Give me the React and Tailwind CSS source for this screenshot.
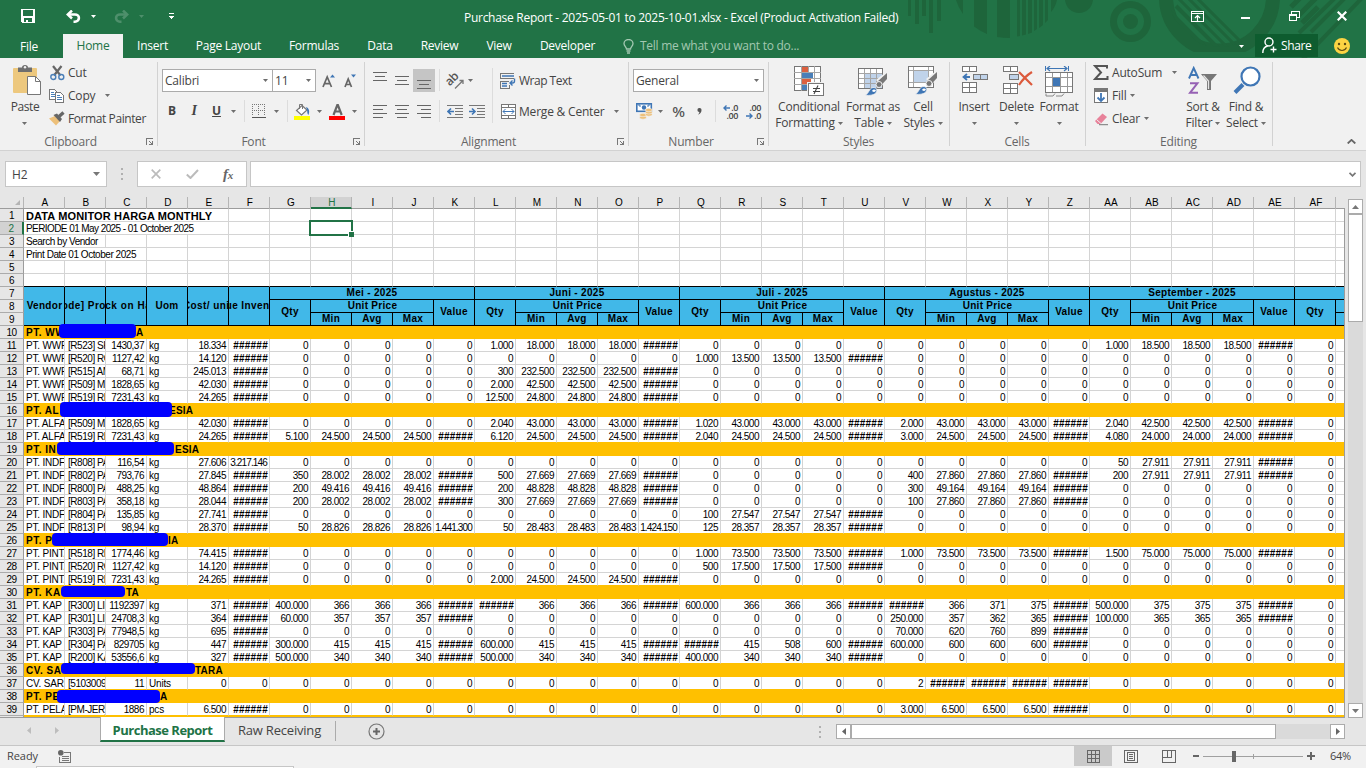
import React from "react";

/* ---------- small shared pieces ---------- */

const Caret = ({ className = "" }) => (
  <svg width="5" height="3" viewBox="0 0 5 3" className={`shrink-0 ${className || "text-[#6e6e6e]"}`}>
    <path d="M0 0h5L2.500 3z" fill="currentColor" />
  </svg>
);

const Svg = ({ w, h, children, className = "", crisp = false }) => (
  <svg
    width={w}
    height={h}
    viewBox={`0 0 ${w} ${h}`}
    fill="none"
    shapeRendering={crisp ? "crispEdges" : "auto"}
    className={`shrink-0 ${className}`}
  >
    {children}
  </svg>
);

const Slot = ({ className = "", children }) => (
  <div className={`flex h-full shrink-0 items-center justify-center ${className}`}>{children}</div>
);

const Sep = ({ className = "" }) => <div className={`w-px shrink-0 bg-[#dcdcdc] ${className}`} />;

const Launcher = () => (
  <Svg w={8} h={8} crisp className="absolute bottom-[4px] right-[4px]">
    <path d="M0 7V0h7v1H1v6z" fill="#777" />
    <path d="M3 3l3 3" stroke="#777" />
    <path d="M7 3v4H3v-1h3V3z" fill="#777" />
  </Svg>
);

const Group = ({ label, className, launcher, children }) => (
  <section className={`relative flex shrink-0 flex-col ${className}`}>
    <div className="flex h-[76px]">{children}</div>
    <div className="flex h-4 items-center justify-center text-[#666]">
      <span>{label}</span>
    </div>
    {launcher && <Launcher />}
    <div className="absolute bottom-1 right-0 top-1 w-px bg-[#d2d2d2]" />
  </section>
);

const BigButton = ({ icon, lines, className }) => (
  <div className={`flex shrink-0 flex-col items-center pt-2 ${className}`}>
    <div className="flex h-[33px] items-start">{icon}</div>
    <div className="h-4 whitespace-nowrap leading-4">{lines[0]}</div>
    <div className="flex h-4 items-center gap-[3px] whitespace-nowrap leading-4">
      {lines[1] && <span>{lines[1]}</span>}
      <Caret />
    </div>
  </div>
);

const SmallRow = ({ icon, text, caret, caretClass = "ml-1", textClass = "" }) => (
  <div className="flex h-[23px] items-center">
    <div className="mr-[3px] flex w-4 shrink-0 items-center justify-center">{icon}</div>
    <span className={`whitespace-nowrap ${textClass}`}>{text}</span>
    {caret && (
      <div className={caretClass}>
        <Caret />
      </div>
    )}
  </div>
);

/* ---------- icons ---------- */

const SaveIcon = () => (
  <Svg w={14} h={14} crisp>
    <path d="M0 0h14v14H1l-1-1zM2 1v6h10V1zM3 9v4h2v-2h2v2h4V9z" fill="#fff" fillRule="evenodd" />
  </Svg>
);

const UndoIcon = ({ className = "" }) => (
  <Svg w={15} h={13} className={className}>
    <path d="M2 4.500h7a3.800 3.500 0 0 1 0 7.200H7.500" stroke="#fff" strokeWidth="2.600" />
    <path d="M6 .5L1.800 4.500 6 8.500" stroke="#fff" strokeWidth="2.500" />
  </Svg>
);

const PasteIcon = () => (
  <Svg w={30} h={31}>
    <rect x="1" y="3" width="24" height="25" rx="1" fill="#edc87e" />
    <path d="M6 2.500h4a3 2.500 0 0 1 6 0h4V7H6z" fill="#6e6e6e" />
    <circle cx="13" cy="2.300" r="1.200" fill="#f1f1f1" />
    <path d="M15.500 11.500h8l5 5v13h-13z" fill="#fff" stroke="#777" />
    <path d="M23.500 11.500v5h5" stroke="#777" />
  </Svg>
);

const CutIcon = () => (
  <Svg w={15} h={16}>
    <path d="M3 1l7.500 9.500M11.500 1L4 10.500" stroke="#666" strokeWidth="2.200" />
    <circle cx="3.300" cy="12" r="2.500" stroke="#4a7fb8" strokeWidth="1.400" />
    <circle cx="11.300" cy="12" r="2.500" stroke="#4a7fb8" strokeWidth="1.400" />
  </Svg>
);

const CopyIcon = () => (
  <Svg w={16} h={14} crisp>
    <path d="M.5.5h5l2 2v8h-7z" fill="#fff" stroke="#777" />
    <path d="M2 3.500h3M2 5.500h4M2 7.500h4" stroke="#4a7fb8" />
    <path d="M6.500 3.500h5l3 3v7h-8z" fill="#fff" stroke="#777" />
    <path d="M8 6.500h3M8 8.500h5M8 10.500h5" stroke="#4a7fb8" />
  </Svg>
);

const PainterIcon = () => (
  <Svg w={16} h={15}>
    <path d="M0 7.500l6-2.500 5 5-4 4.500z" fill="#edc07a" />
    <path d="M4.500 4L8 2.500l5 5.500-2 3z" fill="#666" />
    <path d="M10 5.500L14.500 1.500" stroke="#666" strokeWidth="3.200" />
  </Svg>
);

const GrowFont = () => (
  <Svg w={13} h={14}>
    <path d="M1 13L5.200 3l4.300 10M2.700 9.700h5" stroke="#666" strokeWidth="1.700" />
    <path d="M8 3.500L10.500.5 13 3.500z" fill="#3f76b5" />
  </Svg>
);

const ShrinkFont = () => (
  <Svg w={12} h={14}>
    <path d="M1 13l3.200-8 3.300 8M2.300 10.500h4" stroke="#666" strokeWidth="1.700" />
    <path d="M7 .5h5L9.500 3.500z" fill="#3f76b5" />
  </Svg>
);

const BordersIcon = () => (
  <Svg w={14} h={14} crisp>
    <path d="M0 .5h14M0 6.500h14" stroke="#777" strokeDasharray="1 1" />
    <path d="M.5 0v12M6.500 0v12M12.500 0v12" stroke="#777" strokeDasharray="1 1" />
    <path d="M0 13h14" stroke="#555" strokeWidth="1" />
  </Svg>
);

const BucketIcon = () => (
  <Svg w={17} h={17}>
    <rect x="0" y="13" width="16" height="4" fill="#ff0" />
    <path d="M8 2.500l5 4.500-5.500 5L2.500 7.500z" fill="#fff" stroke="#777" strokeWidth="1.200" />
    <path d="M5.500 6V1.500h3V6" stroke="#777" />
    <path d="M12 4c3 1 4 4 2.500 8-1.500-1-1-3-1.500-5z" fill="#3f76b5" />
  </Svg>
);

const FontColorIcon = () => (
  <Svg w={17} h={17}>
    <rect x="0" y="13" width="16" height="4" fill="#f00" />
    <path d="M4.500 12L8.300 2h.600l3.800 10M6 8.500h5" stroke="#666" strokeWidth="2.200" />
  </Svg>
);

const LinesIcon = ({ h = 9, rows }) => (
  <Svg w={14} h={h} crisp>
    {rows.map(([y, x1, x2]) => (
      <path key={y} d={`M${x1} ${y + 0.5}H${x2}`} stroke="#666" />
    ))}
  </Svg>
);

const IndentIcon = ({ out }) => (
  <Svg w={16} h={13} crisp>
    <path d="M0 .5h16M8 3.500h8M8 6.500h8M8 9.500h8M0 12.500h16" stroke="#777" />
    {out ? (
      <path d="M7 6.500H1M4 3.500l-3 3 3 3" stroke="#3f76b5" strokeWidth="1.600" shapeRendering="auto" />
    ) : (
      <path d="M0 6.500h6M3 3.500l3 3-3 3" stroke="#3f76b5" strokeWidth="1.600" shapeRendering="auto" />
    )}
  </Svg>
);

const OrientationIcon = () => (
  <div className="relative flex h-4 w-4 items-center">
    <span className="-translate-x-[2px] -translate-y-[2px] -rotate-45 text-[12px] font-semibold leading-none tracking-[-0.5px] text-[#555]">
      ab
    </span>
    <Svg w={10} h={10} className="absolute -right-px bottom-0">
      <path d="M1 9.500l8-8M5.500 1.500H9V5" stroke="#777" strokeWidth="1.300" />
    </Svg>
  </div>
);

const WrapIcon = () => (
  <Svg w={16} h={16}>
    <g shapeRendering="crispEdges" stroke="#777">
      <path d="M0 .5h14M0 5.500h14M.5 0v6" />
      <path d="M9 8.500H0M.5 8v8M0 15.500h9.500v-4" />
    </g>
    <path d="M2 3h12M2 10.500h5M2 13h5" stroke="#3f76b5" strokeWidth="1.300" />
    <path d="M14.500 5.500v2.500a2 2 0 0 1-2 2H10M12.500 7.500L10 10l2.500 2.500" stroke="#3f76b5" strokeWidth="1.400" />
  </Svg>
);

const MergeIcon = () => (
  <Svg w={15} h={15} crisp>
    <path d="M.5.5h14v14H.5zM.5 3.500h14M.5 11.500h14M7.500.5v3M7.500 11.500v3" fill="#fff" stroke="#777" />
    <path d="M2 7.500h11" stroke="#3f76b5" />
    <path d="M4.500 5L2 7.500 4.500 10M10.500 5L13 7.500 10.500 10" stroke="#3f76b5" shapeRendering="auto" />
  </Svg>
);

const MoneyIcon = () => (
  <Svg w={17} h={17}>
    <rect x=".8" y=".8" width="14.500" height="7.500" fill="#fff" stroke="#3f76b5" strokeWidth="1.600" />
    <circle cx="8" cy="4.500" r="2.200" fill="#3f76b5" />
    <path d="M2 2h2v2M14 2h-2v2" stroke="#3f76b5" />
    <g fill="#edc07a" stroke="#f1f1f1" strokeWidth=".6">
      <ellipse cx="7" cy="14.500" rx="3.400" ry="1.700" />
      <ellipse cx="7" cy="12" rx="3.400" ry="1.700" />
      <ellipse cx="12.800" cy="11.500" rx="3.400" ry="1.700" />
      <ellipse cx="12.800" cy="9.300" rx="3.400" ry="1.700" />
      <ellipse cx="12.800" cy="7" rx="3.400" ry="1.700" />
    </g>
  </Svg>
);

const DecimalIcon = ({ less }) => (
  <div className="relative flex h-[15px] w-[15px] flex-col justify-between text-[9px] font-semibold leading-[8px] tracking-[-0.4px] text-[#444]">
    <div className="self-end">{less ? ".00" : ".0"}</div>
    <div className="self-end">{less ? ".0" : ".00"}</div>
    <Svg w={7} h={6} className={less ? "absolute bottom-0 left-0" : "absolute left-0 top-[1px]"}>
      {less ? (
        <path d="M0 3h6M3.500.5L6 3 3.500 5.500" stroke="#3f76b5" strokeWidth="1.400" />
      ) : (
        <path d="M7 3H1M3.500.5L1 3l2.500 2.500" stroke="#3f76b5" strokeWidth="1.400" />
      )}
    </Svg>
  </div>
);

const ConditionalIcon = () => (
  <Svg w={30} h={31} crisp>
    <rect x=".5" y=".5" width="26" height="24" fill="#fff" stroke="#777" />
    <path d="M7.500 0v25M14.500 0v25M20.500 0v25M0 6.500h27M0 12.500h27M0 18.500h27" stroke="#a5a5a5" />
    <path d="M8 1h6v5H8zM8 13h9v5H8z" fill="#dc6140" />
    <path d="M8 7h11v5H8zM8 19h6v5H8z" fill="#4a7fb8" />
    <rect x="13" y="16" width="17" height="15" fill="#f1f1f1" />
    <rect x="14.500" y="17.500" width="15" height="12" fill="#fff" stroke="#777" />
    <path d="M18.500 22.500h7M18.500 25.500h7" stroke="#444" />
    <path d="M24 19.500l-4 8.500" stroke="#444" strokeWidth="1.100" shapeRendering="auto" />
  </Svg>
);

const Brush = ({ dy = 0 }) => (
  <g transform={`translate(0 ${dy})`}>
    <path d="M29.500 5v6l-6 6-4-4z" fill="#f1f1f1" stroke="#f1f1f1" strokeWidth="2" />
    <path d="M29 6v6l-6 6.500-3.500-4z" fill="#777" />
    <circle cx="21" cy="17.500" r="3" fill="#777" stroke="#f1f1f1" />
    <path d="M7 28c4-1 4-7 8-7.500 3-.3 4.500 2 3.500 4.500-1.500 3-7 4-11.500 3z" fill="#3f76b5" stroke="#f1f1f1" strokeWidth=".8" />
    <path d="M14 24c1-2 3-2 4-.5-.8 1.500-2 2-4 .5z" fill="#fff" />
  </g>
);

const TableIcon = () => (
  <Svg w={30} h={31}>
    <g shapeRendering="crispEdges">
      <rect x=".5" y="2.500" width="24" height="20" fill="#fff" stroke="#777" />
      <rect x="7" y="8" width="17" height="14" fill="#c0d3ea" />
      <path d="M6.500 3v19M12.500 3v19M18.500 3v19M1 7.500h23M1 12.500h23M1 17.500h23" stroke="#a5a5a5" />
    </g>
    <Brush dy={1} />
  </Svg>
);

const CellStylesIcon = () => (
  <Svg w={30} h={31}>
    <g shapeRendering="crispEdges">
      <rect x=".5" y=".5" width="25" height="21" fill="#fff" stroke="#777" />
      <path d="M5.500 1v20M20.500 1v20M1 4.500h24M1 16.500h24" stroke="#a5a5a5" />
      <rect x="6" y="5" width="14" height="11" fill="#c0d3ea" />
    </g>
    <Brush />
  </Svg>
);

const InsertIcon = () => (
  <Svg w={27} h={29} crisp className="ml-[2px]">
    <path d="M.5.5h14v5H.5zM7.500.5v5M.5 16.500h14v10H.5zM7.500 16.500v10M.5 21.500h14" fill="#fff" stroke="#777" />
    <path d="M11.500 8.500h14v5h-14zM18.500 8.500v5" fill="#c0d3ea" stroke="#777" />
    <path d="M8 11H2M5 8l-3.500 3L5 14" stroke="#3f76b5" strokeWidth="1.800" shapeRendering="auto" />
  </Svg>
);

const DeleteIcon = () => (
  <Svg w={30} h={29} crisp className="ml-[2px]">
    <path d="M.5.5h14v5H.5zM7.500.5v5M.5 17.500h14v10H.5zM7.500 17.500v10M.5 22.500h14" fill="#fff" stroke="#777" />
    <path d="M6.500 8.500h9v5h-9z" fill="#c0d3ea" stroke="#777" />
    <path d="M16 6l13 13M29 6c-5 3-9 7-13 13" stroke="#dc5a3c" strokeWidth="2.200" shapeRendering="auto" />
  </Svg>
);

const FormatIcon = () => (
  <Svg w={29} h={31} crisp>
    <path d="M.5 0v5M23.500 0v5" stroke="#3f76b5" />
    <path d="M2 2.500h20M5 0L2 2.500 5 5M19 0l3 2.500L19 5" stroke="#3f76b5" strokeWidth="1.200" shapeRendering="auto" />
    <rect x=".5" y="6.500" width="27" height="20" fill="#fff" stroke="#777" />
    <path d="M7.500 7v19M15.500 7v19M22.500 7v19M1 11.500h26M1 20.500h26" stroke="#999" />
    <rect x="8" y="12" width="7" height="8" fill="#3f76b5" />
    <path d="M1 27.500v2.500h7l2-2.500M11 30h6l2-2.500" stroke="#888" shapeRendering="auto" />
  </Svg>
);

const SigmaIcon = () => (
  <Svg w={16} h={15}>
    <path d="M14 3.500V1H2l6 6.500L2 14h12.500v-3" stroke="#555" strokeWidth="2" />
  </Svg>
);

const FillIcon = () => (
  <Svg w={14} h={15} crisp>
    <rect x=".5" y=".5" width="13" height="14" fill="#fff" stroke="#777" />
    <rect x="0" y="0" width="14" height="4" fill="#777" />
    <path d="M7 5v8M3.500 9.500L7 13l3.500-3.500" stroke="#3f76b5" strokeWidth="1.800" shapeRendering="auto" />
  </Svg>
);

const EraserIcon = () => (
  <Svg w={15} h={14}>
    <path d="M8.500 1.500L13 5 6.500 12H3.500L1 9z" fill="#e8829a" />
    <path d="M2.500 7.500l4.500 4" stroke="#f1f1f1" strokeWidth="1" />
    <path d="M5 12.700h9" stroke="#777" />
  </Svg>
);

const SortIcon = () => (
  <Svg w={30} h={30}>
    <path d="M1 12.500L5.700 2l4.800 10.500M3 9h5.600" stroke="#3f76b5" strokeWidth="1.900" />
    <path d="M2 17.200h7.500L2 26.800h8" stroke="#9661b4" strokeWidth="1.900" />
    <path d="M13 8h16l-6 7v9h-4v-9z" fill="#777" />
    <path d="M15.500 9.500l5 5.500v8" stroke="#e6e6e6" strokeWidth="1.200" />
  </Svg>
);

const FindIcon = () => (
  <Svg w={28} h={29} className="ml-px">
    <path d="M2 26.500l8-8" stroke="#3f76b5" strokeWidth="4" />
    <circle cx="17.500" cy="10.500" r="9" fill="#fff" stroke="#3f76b5" strokeWidth="2.200" />
  </Svg>
);

/* ---------- title bar and tabs ---------- */

const Pattern = () => (
  <svg width="466" height="58" viewBox="0 0 466 58" fill="none" className="absolute right-0 top-0">
    <defs>
      <clipPath id="ring">
        <circle cx="319.500" cy="-3" r="50" />
      </clipPath>
      <clipPath id="band">
        <rect x="250" y="0" width="150" height="52" />
      </clipPath>
    </defs>
    <g fill="#1e653b">
      <path d="M8 0h3v16H8zM15 0h4v24h-4zM22 0h4v16h-4zM29 0h4v33h-4zM37 0h4v21h-4z" />
      <path d="M56 0h7v14q-5-7-7-14zM74 0h13v34q-7-3-13-7.500zM97 0h13v38q-7 0-13-1zM117 0h3v36l-3 .5zM122 0h4v34.500l-4 1zM128 0h4v32.500l-4 1.500zM134 0h3v29l-3 2zM139 0h4v25l-4 3zM145 0h3v20l-3 3zM151 0h6q-2 8-6 12z" />
      <path d="M165 0h28c-1 8-7 13-14 13S166 8 165 0z" />
      <circle cx="230.500" cy="21.500" r="7.500" />
    </g>
    <circle cx="230.500" cy="21.500" r="17" stroke="#1e653b" strokeWidth="7" />
    <circle cx="319.500" cy="-3" r="53.500" stroke="#1e653b" strokeWidth="14" clipPath="url(#band)" />
    <g clipPath="url(#ring)" stroke="#1e653b">
      <path d="M268 10l44 44M276 6l46 46" strokeWidth="4" />
      <path d="M278-2l52 52M288-2l48 48M297-2l46 46" strokeWidth="3" />
    </g>
    <path d="M391 7l9-9M394 20l22-22M402 23l16-16" stroke="#1e653b" strokeWidth="5" />
    <path d="M399 33l36-35M411 32l34-34M402 60l60-62" stroke="#1e653b" strokeWidth="4" />
  </svg>
);

const TitleBar = () => (
  <div className="relative z-10 flex h-[34px] items-center text-white">
    <div className="flex w-[464px] items-center pb-[2px] pl-[21px]">
      <SaveIcon />
      <UndoIcon className="ml-[31px]" />
      <Caret className="ml-[10px] text-white" />
      <UndoIcon className="ml-[18px] -scale-x-100 opacity-20" />
      <Caret className="ml-[10px] text-white opacity-20" />
      <Svg w={5} h={6} className="ml-[25px]" crisp>
        <path d="M0 0h5v1H0z" fill="#fff" />
        <path d="M0 3h5L2.500 6z" fill="#fff" />
      </Svg>
    </div>
    <div className="w-[727px] whitespace-nowrap pt-px tracking-[-0.28px]">
      Purchase Report - 2025-05-01 to 2025-10-01.xlsx - Excel (Product Activation Failed)
    </div>
    <div className="flex items-center pb-[2px]">
      <Svg w={13} h={11} crisp>
        <path d="M.5.5h12v10H.5zM0 2.500h13" stroke="#fff" />
        <path d="M6.500 10V5M4 7l2.500-2.500L9 7" stroke="#fff" strokeWidth="1.200" shapeRendering="auto" />
      </Svg>
      <div className="ml-[37px] mt-[3px] h-[2px] w-[9px] bg-white" />
      <Svg w={11} h={10} crisp className="ml-[39px]">
        <path d="M2.500 3V.5h8v6H8M.5 3.500h7v6h-7zM0 4h8" stroke="#fff" />
      </Svg>
      <Svg w={10} h={10} className="ml-[37px]">
        <path d="M.7.7l8.600 8.600M9.300.7L.7 9.300" stroke="#fff" strokeWidth="2.200" />
      </Svg>
    </div>
  </div>
);

const menu = [
  ["Insert", "w-[59px]"],
  ["Page Layout", "w-[93px]"],
  ["Formulas", "w-[78px]"],
  ["Data", "w-[54px]"],
  ["Review", "w-[65px]"],
  ["View", "w-[54px]"],
  ["Developer", "w-[83px]"],
];

const MenuTabs = () => (
  <div className="relative z-10 flex h-6 items-center tracking-[-0.25px] text-white">
    <div className="w-[63px] pr-[5px] pt-px text-center">File</div>
    <div className="flex h-full w-[60px] items-center justify-center bg-[#f1f1f1] text-[#217346]">Home</div>
    {menu.map(([name, w]) => (
      <div key={name} className={`whitespace-nowrap text-center ${w}`}>
        {name}
      </div>
    ))}
    <div className="ml-[14px] flex flex-1 items-center gap-[6px] text-[#a3c8b1]">
      <Svg w={11} h={15}>
        <path
          d="M3.500 10c0-2-2.500-3-2.500-5.500a4.500 4 0 0 1 9 0C10 7 7.500 8 7.500 10zM3.500 12h4M4 14h3"
          stroke="currentColor"
          strokeWidth="1.300"
        />
      </Svg>
      <span className="whitespace-nowrap tracking-[-0.27px]">Tell me what you want to do...</span>
    </div>
    <Caret className="mr-[11px] text-white" />
    <div className="flex h-[23px] w-[63px] items-center gap-1 self-start bg-[#0e5c2f] pl-[7px]">
      <Svg w={15} h={17}>
        <circle cx="7" cy="5" r="4" stroke="#fff" strokeWidth="1.400" />
        <path d="M.8 16c0-4 2-6.500 5-7M8.500 12.500h6M11.500 9.500v6" stroke="#fff" strokeWidth="1.400" />
      </Svg>
      <span className="tracking-[-0.4px]">Share</span>
    </div>
    <Svg w={16} h={16} className="ml-4 mr-4">
      <circle cx="8" cy="8" r="8" fill="#fcd443" />
      <circle cx="5" cy="6" r="1.200" fill="#5c4a12" />
      <circle cx="11" cy="6" r="1.200" fill="#5c4a12" />
      <path d="M3.500 9.500c2 4 7 4 9 0" stroke="#5c4a12" strokeWidth="1.200" />
    </Svg>
  </div>
);

/* ---------- ribbon ---------- */

const Ribbon = () => (
  <div className="flex h-[93px] border-b border-[#d2d2d2] bg-[#f1f1f1] text-[#444]">
    <Group label="Clipboard" className="w-[158px] [&>div:nth-child(2)]:pr-[17px]" launcher>
      <div className="flex w-[49px] flex-col items-center pt-[7px]">
        <div className="ml-[5px] h-[34px]">
          <PasteIcon />
        </div>
        <div className="h-4 pl-px leading-4 tracking-[-0.4px]">Paste</div>
        <div className="flex h-4 items-center">
          <Caret />
        </div>
      </div>
      <div className="pt-[3px]">
        <SmallRow icon={<CutIcon />} text="Cut" />
        <SmallRow icon={<CopyIcon />} text="Copy" caret caretClass="ml-[10px]" />
        <SmallRow icon={<PainterIcon />} text="Format Painter" textClass="tracking-[-0.41px]" />
      </div>
    </Group>

    <Group label="Font" className="w-[207px] [&>div:nth-child(2)]:pr-[16px]" launcher>
      <div className="flex flex-col pl-1 pt-[11px]">
        <div className="flex h-[23px] items-center">
          <div className="flex h-full w-[111px] items-center justify-between border border-[#ababab] bg-white pl-[2px] pr-1">
            Calibri <Caret />
          </div>
          <div className="-ml-px flex h-full w-[44px] items-center justify-between border border-[#ababab] bg-white pl-[2px] pr-1">
            11 <Caret />
          </div>
          <div className="ml-[6px]">
            <GrowFont />
          </div>
          <div className="ml-[9px]">
            <ShrinkFont />
          </div>
        </div>
        <div className="mt-2 flex h-[22px] items-center">
          <Slot className="w-5 font-bold">B</Slot>
          <Slot className="w-6 font-['Liberation_Serif',serif] text-[14px] font-bold italic">I</Slot>
          <Slot className="w-[21px] font-bold underline">U</Slot>
          <Slot className="w-[13px]">
            <Caret />
          </Slot>
          <Sep className="ml-1 h-[22px]" />
          <Slot className="w-7">
            <BordersIcon />
          </Slot>
          <Slot className="w-[7px]">
            <Caret />
          </Slot>
          <Sep className="ml-[7px] h-[22px]" />
          <Slot className="w-[29px]">
            <BucketIcon />
          </Slot>
          <Caret />
          <Slot className="w-[30px]">
            <FontColorIcon />
          </Slot>
          <Caret />
        </div>
      </div>
    </Group>

    <Group label="Alignment" className="w-[264px] [&>div:nth-child(2)]:pr-[17px]" launcher>
      <div className="flex flex-col pl-1 pt-[11px]">
        <div className="flex h-[23px]">
          <div className="flex w-[22px] justify-center pt-[3px]">
            <LinesIcon rows={[[0, 0, 14], [4, 2, 12], [8, 0, 14]]} />
          </div>
          <div className="flex w-[22px] justify-center pt-[7px]">
            <LinesIcon rows={[[0, 0, 14], [4, 2, 12], [8, 0, 14]]} />
          </div>
          <div className="flex w-[22px] justify-center bg-[#c5c5c5] pt-[11px]">
            <LinesIcon rows={[[0, 0, 14], [4, 2, 12], [8, 0, 14]]} />
          </div>
          <Sep className="ml-1 h-[22px]" />
          <Slot className="w-[29px]">
            <OrientationIcon />
          </Slot>
          <Slot className="w-[5px] pr-[2px]">
            <Caret />
          </Slot>
        </div>
        <div className="mt-2 flex h-[22px] items-center">
          <Slot className="w-[22px]">
            <LinesIcon h={13} rows={[[0, 0, 14], [4, 0, 10], [8, 0, 14], [12, 0, 10]]} />
          </Slot>
          <Slot className="w-[22px]">
            <LinesIcon h={13} rows={[[0, 0, 14], [4, 2, 12], [8, 0, 14], [12, 2, 12]]} />
          </Slot>
          <Slot className="w-[22px]">
            <LinesIcon h={13} rows={[[0, 0, 14], [4, 4, 14], [8, 0, 14], [12, 4, 14]]} />
          </Slot>
          <Sep className="ml-1 h-[22px]" />
          <Slot className="w-[29px]">
            <IndentIcon out />
          </Slot>
          <Slot className="w-[15px]">
            <IndentIcon />
          </Slot>
        </div>
      </div>
      <Sep className="ml-2 mt-[10px] h-[55px]" />
      <div className="ml-[7px] pt-[11px]">
        <SmallRow icon={<WrapIcon />} text="Wrap Text" textClass="tracking-[-0.5px]" />
        <div className="mt-2">
          <SmallRow icon={<MergeIcon />} text="Merge & Center" caret caretClass="ml-[10px]" />
        </div>
      </div>
    </Group>

    <Group label="Number" className="w-[140px] [&>div:nth-child(2)]:pr-[16px]" launcher>
      <div className="flex flex-col pl-1 pt-[11px]">
        <div className="flex h-[23px] w-[131px] items-center justify-between border border-[#ababab] bg-white pl-[2px] pr-1">
          General <Caret />
        </div>
        <div className="mt-2 flex h-[22px] items-center">
          <Slot className="w-[23px]">
            <MoneyIcon />
          </Slot>
          <Slot className="w-[8px]">
            <Caret />
          </Slot>
          <Slot className="w-[29px] font-['Noto_Sans',sans-serif] text-[15px] font-medium text-[#555]">%</Slot>
          <Slot className="w-[12px] pt-px">
            <Svg w={5} h={7}>
              <path d="M2.500 0a2 2 0 0 1 2 2.200C4.500 4.500 3 6 1 6.700 2 5.500 2.400 4.800 2.300 4A2 2 0 0 1 2.500 0z" fill="#555" />
            </Svg>
          </Slot>
          <Sep className="ml-[10px] h-[22px]" />
          <Slot className="w-[29px]">
            <DecimalIcon />
          </Slot>
          <Slot className="w-[17px]">
            <DecimalIcon less />
          </Slot>
        </div>
      </div>
    </Group>

    <Group label="Styles" className="w-[181px] [&>div:nth-child(2)]:pr-[2px]">
      <BigButton className="ml-1 w-[72px]" icon={<ConditionalIcon />} lines={["Conditional", "Formatting"]} />
      <BigButton className="w-[56px]" icon={<TableIcon />} lines={["Format as", "Table"]} />
      <BigButton className="w-[44px]" icon={<CellStylesIcon />} lines={["Cell", "Styles"]} />
    </Group>

    <Group label="Cells" className="w-[136px] [&>div:nth-child(2)]:pr-[2px]">
      <BigButton className="w-[48px]" icon={<InsertIcon />} lines={["Insert"]} />
      <BigButton className="w-[37px]" icon={<DeleteIcon />} lines={["Delete"]} />
      <BigButton className="w-[48px]" icon={<FormatIcon />} lines={["Format"]} />
    </Group>

    <Group label="Editing" className="w-[187px] [&>div:nth-child(2)]:pr-[2px]">
      <div className="w-[95px] pl-[7px] pt-[3px]">
        <SmallRow icon={<SigmaIcon />} text="AutoSum" caret caretClass="ml-[10px]" />
        <SmallRow icon={<FillIcon />} text="Fill" caret />
        <SmallRow icon={<EraserIcon />} text="Clear" caret />
      </div>
      <BigButton className="w-[44px]" icon={<SortIcon />} lines={["Sort &", "Filter"]} />
      <BigButton className="w-[42px]" icon={<FindIcon />} lines={["Find &", "Select"]} />
    </Group>

    <div className="flex flex-1 items-end justify-end pb-[6px] pr-[10px]">
      <Svg w={9} h={5}>
        <path d="M.7 4.500l3.800-3.600 3.800 3.600" stroke="#666" strokeWidth="1.800" />
      </Svg>
    </div>
  </div>
);

/* ---------- formula bar ---------- */

const FormulaBar = () => (
  <div className="flex h-[46px] bg-[#e6e6e6] pt-[10px] text-[#444]">
    <div className="ml-[5px] flex h-[26px] w-[102px] items-center justify-between border border-[#c6c6c6] bg-white pl-[6px] pr-[6px]">
      <span className="pt-[2px]">H2</span>
      <svg width="7" height="4" viewBox="0 0 7 4">
        <path d="M0 0h7L3.500 4z" fill="#777" />
      </svg>
    </div>
    <div className="flex h-[26px] w-[30px] flex-col items-center justify-center gap-[3px]">
      <i className="h-[2px] w-[2px] bg-[#b0b0b0]" />
      <i className="h-[2px] w-[2px] bg-[#b0b0b0]" />
      <i className="h-[2px] w-[2px] bg-[#b0b0b0]" />
    </div>
    <div className="flex h-[26px] w-[110px] items-center border border-[#c6c6c6] bg-white pl-[13px]">
      <Svg w={10} h={10}>
        <path d="M.7.7l8.600 8.600M9.300.7L.7 9.300" stroke="#bbb" strokeWidth="1.700" />
      </Svg>
      <Svg w={13} h={10} className="ml-[25px]">
        <path d="M.8 5.500L4.500 9 12 1" stroke="#bbb" strokeWidth="2" />
      </Svg>
      <span className="ml-6 font-['Liberation_Serif',serif] text-[15px] font-bold italic leading-none text-[#666]">
        f<span className="text-[11px]">x</span>
      </span>
    </div>
    <div className="ml-[3px] flex h-[26px] w-[1111px] items-center justify-end border border-[#c6c6c6] bg-white pr-1">
      <Svg w={7} h={5}>
        <path d="M.5.8l3 3 3-3" stroke="#777" strokeWidth="1.800" />
      </Svg>
    </div>
  </div>
);

/* ---------- sheet ---------- */

const columns = "A B C D E F G H I J K L M N O P Q R S T U V W X Y Z AA AB AC AD AE AF".split(" ");
const months = ["Mei - 2025", "Juni - 2025", "Juli - 2025", "Agustus - 2025", "September - 2025"];
const HASH = "######";

// Each month block is "qty price" (one price throughout), "qty min avg max", or "0".
const block = (s) => {
  if (s === "0") return ["0", "0", "0", "0", "0"];
  const p = s.split(" ").map((v) => (v === "#" ? HASH : v));
  if (p.length === 2) return [p[0], p[1], p[1], p[1], HASH];
  if (p.length === 3) return [p[0], p[1], p[1], p[1], p[2]];
  return [...p, HASH];
};

const item = (vendor, code, stock, cost, blocks, value = HASH, uom = "kg") => ({
  cells: [vendor, code, stock, uom, cost, value, ...blocks.split("|").flatMap(block), "0"],
});

const rows = {
  10: { band: "PT. WW", prefix: "w-[33px]", blob: "h-[14px] w-[77px] -mt-[2px]", tail: "A", tailClass: "" },
  11: item("PT. WWF", "[R523] SK", "1430,37", "18.334", "0|1.000 18.000|0|0|1.000 18.500"),
  12: item("PT. WWF", "[R520] RO", "1127,42", "14.120", "0|0|1.000 13.500|0|0"),
  13: item("PT. WWF", "[R515] AM", "68,71", "245.013", "0|300 232.500|0|0|0"),
  14: item("PT. WWF", "[R509] MA", "1828,65", "42.030", "0|2.000 42.500|0|0|0"),
  15: item("PT. WWF", "[R519] RD", "7231,43", "24.265", "0|12.500 24.800|0|0|0"),
  16: { band: "PT. AL", prefix: "w-[34px]", blob: "h-[15px] w-[112px] -mt-[2px]", tail: "ESIA", tailClass: "-ml-[3px]" },
  17: item("PT. ALFA", "[R509] MA", "1828,65", "42.030", "0|2.040 43.000|1.020 43.000|2.000 43.000|2.040 42.500"),
  18: item("PT. ALFA", "[R519] RD", "7231,43", "24.265", "5.100 24.500|6.120 24.500|2.040 24.500|3.000 24.500|4.080 24.000"),
  19: { band: "PT. IN", prefix: "w-[31px]", blob: "h-[13px] w-[117px] -mt-[1px]", tail: "ESIA", tailClass: "ml-px" },
  20: item("PT. INDFO", "[R808] PA", "116,54", "27.606", "0|0|0|0|50 27.911", "3.217.146"),
  21: item("PT. INDFO", "[R802] PA", "793,76", "27.845", "350 28.002|500 27.669|0|400 27.860|200 27.911"),
  22: item("PT. INDFO", "[R800] PA", "488,25", "48.864", "200 49.416|200 48.828|0|300 49.164|0"),
  23: item("PT. INDFO", "[R803] PA", "358,18", "28.044", "200 28.002|300 27.669|0|100 27.860|0"),
  24: item("PT. INDFO", "[R804] PA", "135,85", "27.741", "0|0|100 27.547|0|0"),
  25: item("PT. INDFO", "[R813] PIN", "98,94", "28.370", "50 28.826 1.441.300|50 28.483 1.424.150|125 28.357|0|0"),
  26: { band: "PT. P", prefix: "w-[26px]", blob: "h-[13px] w-[116px] -mt-px", tail: "IA", tailClass: "" },
  27: item("PT. PINTA", "[R518] RD", "1774,46", "74.415", "0|0|1.000 73.500|1.000 73.500|1.500 75.000"),
  28: item("PT. PINTA", "[R520] RO", "1127,42", "14.120", "0|0|500 17.500|0|0"),
  29: item("PT. PINTA", "[R519] RD", "7231,43", "24.265", "0|2.000 24.500|0|0|0"),
  30: { band: "PT. KA", prefix: "w-[35px]", blob: "h-[11px] w-[64px]", tail: "TA", tailClass: "ml-px" },
  31: item("PT. KAP", "[R300] LIN", "1192397", "371", "400.000 366|# 366|600.000 366|# 366 371 375|500.000 375"),
  32: item("PT. KAP", "[R301] LIN", "24708,3", "364", "60.000 357|0|0|250.000 357 362 365|100.000 365"),
  33: item("PT. KAP", "[R303] PA", "77948,5", "695", "0|0|0|70.000 620 760 899|0"),
  34: item("PT. KAP", "[R304] PA", "829705", "447", "300.000 415|600.000 415|# 415 508 600|600.000 600|0"),
  35: item("PT. KAP", "[R200] KA", "53556,6", "327", "500.000 340|500.000 340|400.000 340|0|0"),
  36: { band: "CV. SA", prefix: "w-[35px]", blob: "h-[11px] w-[134px] -mt-px", tail: "TARA", tailClass: "" },
  37: item("CV. SAR", "[5103009]", "11", "0", "0|0|0|2 # # #|0", "0", "Units"),
  38: { band: "PT. PE", prefix: "w-[31px]", blob: "h-[13px] w-[103px]", tail: "A", tailClass: "" },
  39: item("PT. PELA", "[PM-JER]", "1886", "6.500", "0|0|0|3.000 6.500|0", HASH, "pcs"),
};

const titles = {
  1: { text: "DATA MONITOR HARGA MONTHLY", span: 5, w: "w-[205px]", cls: "text-[11px] font-bold tracking-[0.13px]" },
  2: { text: "PERIODE 01 May 2025 - 01 October 2025", span: 5, w: "w-[205px]", cls: "tracking-[-0.58px]" },
  3: { text: "Search by Vendor", span: 2, w: "w-[82px]", cls: "tracking-[-0.48px]" },
  4: { text: "Print Date 01 October 2025", span: 3, w: "w-[123px]", cls: "tracking-[-0.45px]" },
};

const spacing = (text, i) => {
  if (text === HASH) return "justify-end pr-px font-semibold tracking-[0.25px]";
  if (i === 0 || i === 3) return "pl-[2px] tracking-[-0.2px]";
  if (i === 1) return "pl-[3px] tracking-[-0.45px]";
  return text.length > 8 ? "justify-end pr-[2px] tracking-[-0.85px]" : "justify-end pr-[2px] tracking-[-0.5px]";
};

const Cell = ({ text, i, last }) => (
  <div
    className={`flex h-[13px] w-[41px] shrink-0 items-center overflow-hidden whitespace-nowrap border-b border-r border-r-[#d4d4d4] ${
      last ? "border-b-[#ffc000]" : "border-b-[#d4d4d4]"
    } ${spacing(text, i)}`}
  >
    <span className="translate-y-px">{text}</span>
  </div>
);

const Edge = ({ last }) => (
  <div className={`h-[13px] w-2 shrink-0 border-b ${last ? "border-[#ffc000]" : "border-[#d4d4d4]"}`} />
);

const TitleRow = ({ n }) => {
  const t = titles[n];
  const start = t ? t.span : 0;
  const border = n === 6 ? "border-b-black" : "border-b-[#d4d4d4]";
  return (
    <div className="flex">
      {t && (
        <div
          className={`flex h-[13px] shrink-0 items-center whitespace-nowrap border-b border-r border-[#d4d4d4] pl-[2px] pt-[2px] ${t.w} ${t.cls}`}
        >
          {t.text}
        </div>
      )}
      {columns.slice(start).map((c) => (
        <div key={c} className={`h-[13px] w-[41px] shrink-0 border-b border-r border-r-[#d4d4d4] ${border}`} />
      ))}
      <div className={`h-[13px] w-2 shrink-0 border-b ${border}`} />
    </div>
  );
};

const Head = ({ className, children }) => (
  <div className={`flex shrink-0 items-center justify-center overflow-hidden whitespace-nowrap border-b border-r border-black ${className}`}>
    <span className="shrink-0">{children}</span>
  </div>
);

const fixedHeads = [
  ["Vendor", "pl-px"],
  ["[Kode] Product", "pl-[9px] tracking-[0.45px]"],
  ["Stock on Hand", "tracking-[0.55px]"],
  ["Uom", ""],
  ["Cost/ unit", "tracking-[0.4px]"],
  ["Value Inventory", "pl-[2px] tracking-[0.4px]"],
];

const HeaderBlock = () => (
  <div className="flex h-[39px] bg-[#41b8e8] font-bold tracking-[0.3px]">
    {fixedHeads.map(([h, cls]) => (
      <Head key={h} className={`h-[39px] w-[41px] ${cls}`}>
        {h}
      </Head>
    ))}
    {months.map((m) => (
      <div key={m} className="w-[205px] shrink-0">
        <Head className="h-[13px] w-[205px]">{m}</Head>
        <div className="flex">
          <Head className="h-[26px] w-[41px] pb-[2px]">Qty</Head>
          <div className="w-[123px]">
            <Head className="h-[13px] w-[123px] pl-px">Unit Price</Head>
            <div className="flex">
              <Head className="h-[13px] w-[41px]">Min</Head>
              <Head className="h-[13px] w-[41px]">Avg</Head>
              <Head className="h-[13px] w-[41px]">Max</Head>
            </div>
          </div>
          <Head className="h-[26px] w-[41px] pb-[2px]">Value</Head>
        </div>
      </div>
    ))}
    <div className="w-[49px] shrink-0">
      <div className="h-[13px] border-b border-black" />
      <div className="flex">
        <Head className="h-[26px] w-[41px] pb-[2px]">Qty</Head>
        <div className="w-2">
          <div className="h-[13px] border-b border-black" />
          <div className="h-[13px] border-b border-black" />
        </div>
      </div>
    </div>
  </div>
);

const Band = ({ band, prefix, blob, tail, tailClass }) => (
  <div className="flex h-[13px] bg-[#ffc000] pl-[2px] font-bold leading-[14px] tracking-[0.25px]">
    <span className={`shrink-0 whitespace-nowrap tracking-[0.5px] ${prefix}`}>{band}</span>
    <span className={`relative z-10 shrink-0 rounded-[4px] bg-[#0000ff] ${blob}`} />
    <span className={tailClass}>{tail}</span>
  </div>
);

const Sheet = () => (
  <div className="flex h-[521px] bg-[#e6e6e6] font-['Liberation_Sans',Arial,sans-serif] text-[10px] leading-[12px] text-black">
    <div className="w-[1345px] shrink-0 overflow-hidden">
      <div className="flex h-3 border-b border-[#9c9c9c]">
        <div className="flex w-6 items-end justify-end border-r border-[#b5b5b5] pb-[3px] pr-[3px]">
          <svg width="5" height="5" viewBox="0 0 5 5">
            <path d="M5 0v5H0z" fill="#b4b4b4" />
          </svg>
        </div>
        {columns.map((c) => (
          <div
            key={c}
            className={`flex h-3 w-[41px] shrink-0 items-center justify-center border-r border-[#b5b5b5] pl-[2px] tracking-[0.2px] ${
              c === "H" ? "border-b-2 border-b-[#217346] bg-[#d2d2d2] pt-[2px] text-[#217346]" : ""
            }`}
          >
            {c}
          </div>
        ))}
      </div>
      <div className="flex h-[508px] overflow-hidden">
        <div className="w-6 shrink-0">
          {Array.from({ length: 39 }, (_, i) => i + 1).map((n) => (
            <div
              key={n}
              className={`flex h-[13px] items-center justify-center border-b border-b-[#ababab] pt-[2px] tracking-[-0.5px] ${
                n === 2 ? "border-r-2 border-r-[#217346] bg-[#d2d2d2] text-[#217346]" : "border-r border-r-[#9c9c9c]"
              }`}
            >
              {n}
            </div>
          ))}
          <div className="h-[13px] border-r border-[#9c9c9c]" />
        </div>
        <div className="relative w-[1320px] shrink-0 overflow-hidden bg-white">
          {[1, 2, 3, 4, 5, 6].map((n) => (
            <TitleRow key={n} n={n} />
          ))}
          <HeaderBlock />
          {Object.entries(rows).map(([n, r]) => {
            if (r.band) return <Band key={n} {...r} />;
            const next = rows[Number(n) + 1];
            const last = !next || Boolean(next.band);
            return (
              <div key={n} className="flex">
                {r.cells.map((c, i) => (
                  <Cell key={i} text={c} i={i} last={last} />
                ))}
                <Edge last={last} />
              </div>
            );
          })}
          <div className="h-[13px] bg-[#ffc000]" />
          <div className="absolute left-[285px] top-[11px] h-[16px] w-[44px] border-2 border-[#217346]">
            <div className="absolute -bottom-[3px] -right-[3px] h-[6px] w-[6px] border-l border-t border-white bg-[#217346]" />
          </div>
        </div>
        <div className="w-px bg-[#9c9c9c]" />
      </div>
      <div className="h-px bg-[#9c9c9c]" />
    </div>
    <div className="ml-[3px] mt-[2px] flex h-[519px] w-[15px] flex-col bg-[#dadada]">
      <div className="flex h-[15px] items-center justify-center border border-[#ababab] bg-white">
        <svg width="7" height="4" viewBox="0 0 7 4">
          <path d="M0 4h7L3.500 0z" fill="#777" />
        </svg>
      </div>
      <div className="h-[108px] border border-[#ababab] bg-white" />
      <div className="flex-1" />
      <div className="flex h-[15px] items-center justify-center border border-[#ababab] bg-white">
        <svg width="7" height="4" viewBox="0 0 7 4">
          <path d="M0 0h7L3.500 4z" fill="#777" />
        </svg>
      </div>
    </div>
  </div>
);

/* ---------- bottom bars ---------- */

const SheetTabs = () => (
  <div className="flex h-[27px] items-start bg-[#e6e6e6] text-[13px] text-[#444]">
    <div className="flex h-[25px] w-[100px] items-center gap-6 pl-[27px]">
      <Svg w={4} h={7}>
        <path d="M4 0v7L0 3.500z" fill="#bdbdbd" />
      </Svg>
      <Svg w={4} h={7}>
        <path d="M0 0v7l4-3.500z" fill="#bdbdbd" />
      </Svg>
    </div>
    <div className="-mt-px flex h-[25px] w-[125px] items-center justify-center whitespace-nowrap border-x border-b-2 border-x-[#ababab] border-b-[#217346] bg-white pt-[2px] font-bold tracking-[-0.5px] text-[#217346]">
      Purchase Report
    </div>
    <div className="flex h-6 w-[110px] items-center justify-center whitespace-nowrap pr-px tracking-[-0.2px]">Raw Receiving</div>
    <div className="mt-[3px] h-5 w-px bg-[#ababab]" />
    <Svg w={17} h={17} className="ml-8 mt-[5px]">
      <circle cx="8.500" cy="8.500" r="7.500" stroke="#777" strokeWidth="1.200" />
      <path d="M8.500 5v7M5 8.500h7" stroke="#666" strokeWidth="2" />
    </Svg>
    <div className="flex-1" />
    <div className="mr-[15px] mt-2 flex flex-col gap-[3px]">
      <i className="h-[2px] w-[2px] bg-[#b0b0b0]" />
      <i className="h-[2px] w-[2px] bg-[#b0b0b0]" />
      <i className="h-[2px] w-[2px] bg-[#b0b0b0]" />
    </div>
    <div className="mr-[21px] mt-[6px] flex h-[15px] w-[509px] bg-[#dadada]">
      <div className="flex w-[15px] items-center justify-center border border-[#ababab] bg-white">
        <Svg w={4} h={7}>
          <path d="M4 0v7L0 3.500z" fill="#666" />
        </Svg>
      </div>
      <div className="w-[425px] border border-[#ababab] bg-white" />
      <div className="flex-1" />
      <div className="flex w-[15px] items-center justify-center border border-[#ababab] bg-white">
        <Svg w={4} h={7}>
          <path d="M0 0v7l4-3.500z" fill="#666" />
        </Svg>
      </div>
    </div>
  </div>
);

const StatusBar = () => (
  <div className="relative flex h-[23px] items-start border-t border-[#c6c6c6] bg-[#f1f1f1] text-[11px] text-[#444]">
    <div className="flex h-[21px] items-center pl-[7px]">
      <span className="w-[51px] pb-px tracking-[-0.05px]">Ready</span>
      <Svg w={13} h={13} crisp>
        <path d="M6 2.500h6.500v10H1.500V7M4 6.500h7M4 8.500h7M4 10.500h7" stroke="#777" />
        <circle cx="2.800" cy="2.800" r="2.800" fill="#666" shapeRendering="auto" />
      </Svg>
    </div>
    <div className="flex-1" />
    <div className="flex h-5 w-[292px] items-center">
      <div className="flex h-5 w-[38px] items-center justify-center bg-[#cacaca]">
        <Svg w={13} h={13} crisp>
          <path d="M.5.5h12v12H.5zM4.500 0v13M8.500 0v13M0 4.500h13M0 8.500h13" stroke="#666" />
        </Svg>
      </div>
      <Svg w={14} h={13} crisp className="ml-3">
        <path d="M.5.5h13v12H.5zM3.500 2.500h7v8h-7zM5 4.500h4M5 6.500h4M5 8.500h4" stroke="#666" />
      </Svg>
      <Svg w={14} h={13} crisp className="ml-6">
        <path d="M.5.5h13v12H.5zM5.500 0v7M9.500 0v7M0 7.500h10" stroke="#666" />
      </Svg>
      <div className="ml-[17px] h-[2px] w-[6px] bg-[#666]" />
      <div className="ml-1 flex h-full w-[100px] items-center">
        <div className="h-px w-[29px] bg-[#a0a0a0]" />
        <div className="h-[11px] w-1 bg-[#666]" />
        <div className="h-px w-[17px] bg-[#a0a0a0]" />
        <div className="h-[5px] w-px bg-[#a0a0a0]" />
        <div className="h-px flex-1 bg-[#a0a0a0]" />
      </div>
      <Svg w={8} h={8} crisp className="ml-1">
        <path d="M3 0h2v3h3v2H5v3H3V5H0V3h3z" fill="#666" />
      </Svg>
      <span className="ml-[15px] tracking-[-0.3px]">64%</span>
    </div>
    <div className="absolute bottom-0 left-[36px] h-[2px] w-[258px] border-x border-t border-[#c6c6c6] bg-white" />
  </div>
);

export default function App() {
  return (
    <div className="flex h-[768px] w-[1366px] flex-col overflow-hidden bg-[#e6e6e6] font-['Open_Sans','Noto_Sans',sans-serif] text-[12px] leading-4 tracking-[-0.2px]">
      <header className="relative h-[58px] shrink-0 bg-[#217346]">
        <Pattern />
        <TitleBar />
        <MenuTabs />
      </header>
      <Ribbon />
      <FormulaBar />
      <Sheet />
      <SheetTabs />
      <StatusBar />
    </div>
  );
}
